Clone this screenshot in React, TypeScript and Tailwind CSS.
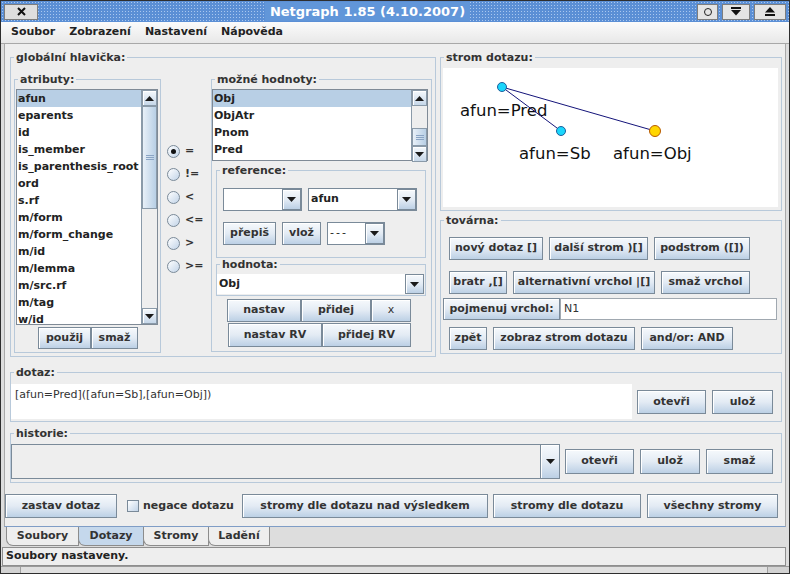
import React from 'react';

type Kids = { children?: React.ReactNode; className?: string };

const Tri = ({ up = false }: { up?: boolean }) => (
  <svg width="9" height="5" viewBox="0 0 9 5">
    <path d={up ? 'M0 5h9L4.5 0z' : 'M0 0h9L4.5 5z'} fill="#1a1a1a" />
  </svg>
);

const Btn = ({ children, className = '' }: Kids) => (
  <button
    type="button"
    className={`flex shrink-0 items-center justify-center whitespace-nowrap border border-[#7a8a99] bg-linear-to-b from-[#f6f9fc] via-[#e3ebf4] to-[#bcd0e5] text-[11px] font-bold text-[#333] shadow-[inset_1px_1px_0_#ffffff] ${className}`}
  >
    {children}
  </button>
);

const Group = ({ title, className = '', children }: Kids & { title: string }) => (
  <fieldset className={`min-w-0 shrink-0 border border-[#b8c9da] ${className}`}>
    <legend className="ml-[3px] px-[2px] text-[11px] font-bold leading-[13px] text-[#333]">{title}</legend>
    {children}
  </fieldset>
);

const ScrollBtn = ({ up = false }: { up?: boolean }) => (
  <div className="flex h-[16px] shrink-0 items-center justify-center border border-[#8a9aa9] bg-linear-to-b from-[#f6f9fc] to-[#c6d7e9] shadow-[inset_1px_1px_0_#ffffff]">
    <Tri up={up} />
  </div>
);

// vertical scrollbar, gap/thumb heights given as class names
const VScroll = ({ gap, thumb }: { gap: string; thumb: string }) => (
  <div className="flex w-[16px] shrink-0 flex-col border-l border-[#8a9aa9] bg-[#eeeeee]">
    <ScrollBtn up />
    <div className="flex flex-1 flex-col">
      <div className={gap} />
      <div
        className={`flex flex-col items-center justify-center gap-[1px] border border-[#8a9aa9] bg-linear-to-r from-[#e8f0f8] to-[#b8cfe5] ${thumb}`}
      >
        <div className="h-px w-[8px] bg-[#8aa4c4]" />
        <div className="h-px w-[8px] bg-[#8aa4c4]" />
        <div className="h-px w-[8px] bg-[#8aa4c4]" />
      </div>
    </div>
    <ScrollBtn />
  </div>
);

const ListBox = ({
  items,
  className = '',
  gap,
  thumb,
}: {
  items: string[];
  className?: string;
  gap: string;
  thumb: string;
}) => (
  <div className={`flex shrink-0 border border-[#7f8a96] bg-white ${className}`}>
    <div className="flex-1 overflow-hidden">
      {items.map((it, i) => (
        <div
          key={it}
          className={`h-[17px] whitespace-nowrap pl-[1px] text-[11px] font-bold leading-[17px] text-[#222] ${i === 0 ? 'bg-[#b8cfe5]' : ''}`}
        >
          {it}
        </div>
      ))}
    </div>
    <VScroll gap={gap} thumb={thumb} />
  </div>
);

const Combo = ({
  value = '',
  className = '',
  flat = false,
  textClass = '',
}: {
  value?: string;
  className?: string;
  flat?: boolean;
  textClass?: string;
}) => (
  <div className={`flex shrink-0 bg-white ${flat ? '' : 'border border-[#7a8a99]'} ${className}`}>
    <div className={`flex flex-1 items-center overflow-hidden pl-[2px] text-[11px] font-bold text-[#222] ${textClass}`}>{value}</div>
    <div className="flex w-[19px] items-center justify-center border border-[#7a8a99] bg-linear-to-b from-[#f6f9fc] via-[#e3ebf4] to-[#bcd0e5] shadow-[inset_1px_1px_0_#ffffff]">
      <Tri />
    </div>
  </div>
);

const Radio = ({ on = false, label }: { on?: boolean; label: string }) => (
  <div className="flex h-[23px] items-center">
    <div className="flex h-[13px] w-[13px] items-center justify-center rounded-full border border-[#7a8a99] bg-linear-to-br from-white to-[#c2d4e8]">
      {on && <div className="h-[5px] w-[5px] rounded-full bg-[#111]" />}
    </div>
    <span className="ml-[5px] text-[11px] font-bold text-[#333]">{label}</span>
  </div>
);

const TitleBar = () => (
  <div className="flex h-[21px] shrink-0 items-center bg-[#5b8fd5] bg-[radial-gradient(circle,#a9c7ef_0.7px,transparent_0.9px)] bg-[length:3px_3px]">
    <div className="ml-[3px] flex h-[16px] w-[34px] items-center justify-center border border-[#7d7d7d] bg-[#dedede]">
      <svg width="9" height="9" viewBox="0 0 9 9">
        <path d="M1 1l7 7M8 1l-7 7" stroke="#111" strokeWidth="2" />
      </svg>
    </div>
    <div className="flex flex-1 justify-center">
      <span className="bg-[#6196d9] px-[5px] text-[13px] font-bold leading-[19px] text-white">Netgraph 1.85 (4.10.2007)</span>
    </div>
    <div className="mr-[3px] flex gap-[4px]">
      <div className="flex h-[16px] w-[21px] items-center justify-center border border-[#7d7d7d] bg-[#e4e4e4]">
        <div className="h-[8px] w-[8px] rounded-full border border-[#222]" />
      </div>
      <div className="flex h-[16px] w-[28px] items-center justify-center border border-[#7d7d7d] bg-[#e4e4e4]">
        <svg width="10" height="9" viewBox="0 0 10 9">
          <rect x="0" y="0" width="10" height="2" fill="#111" />
          <path d="M0 3h10L5 8.5z" fill="#111" />
        </svg>
      </div>
      <div className="flex h-[16px] w-[32px] items-center justify-center border border-[#7d7d7d] bg-[#e4e4e4]">
        <svg width="10" height="9" viewBox="0 0 10 9">
          <path d="M0 5.5h10L5 0z" fill="#111" />
          <rect x="0" y="7" width="10" height="2" fill="#111" />
        </svg>
      </div>
    </div>
  </div>
);

const MenuBar = () => (
  <div className="flex h-[22px] shrink-0 items-center border-b border-[#a8a8a8] bg-linear-to-b from-[#fbfbfb] to-[#e8e8e8] pl-[3px] text-[11px] font-bold text-[#222]">
    {['Soubor', 'Zobrazení', 'Nastavení', 'Nápověda'].map((m) => (
      <span key={m} className="px-[7px]">
        {m}
      </span>
    ))}
  </div>
);

const QueryGraph = () => (
  <svg width="335" height="139" className="block">
    <g fontFamily="DejaVu Sans, sans-serif" fontSize="16.5" fontWeight="normal" fill="#111">
      <text x="17" y="48">afun=Pred</text>
      <text x="76" y="91">afun=Sb</text>
      <text x="170" y="91">afun=Obj</text>
    </g>
    <line x1="59" y1="19" x2="118" y2="63" stroke="#14147a" strokeWidth="1" />
    <line x1="59" y1="19" x2="212" y2="63" stroke="#14147a" strokeWidth="1" />
    <circle cx="59" cy="19" r="4.5" fill="#1ad6fc" stroke="#1d5f9c" />
    <circle cx="118" cy="63" r="4.5" fill="#1ad6fc" stroke="#1d5f9c" />
    <circle cx="212" cy="63" r="5.5" fill="#ffd600" stroke="#b85a00" />
  </svg>
);

const attrs = [
  'afun',
  'eparents',
  'id',
  'is_member',
  'is_parenthesis_root',
  'ord',
  's.rf',
  'm/form',
  'm/form_change',
  'm/id',
  'm/lemma',
  'm/src.rf',
  'm/tag',
  'w/id',
];

export default function App() {
  return (
    <div className="flex h-[574px] w-[790px] flex-col overflow-hidden border border-[#2e2e2e] bg-[#dddddd] font-['DejaVu_Sans',sans-serif] text-[11px] font-bold text-[#333]">
      <TitleBar />
      <MenuBar />

      {/* Dotazy tab content */}
      <div className="mx-[3px] flex h-[483px] shrink-0 flex-col border-x border-b border-x-[#a9a9a9] border-b-[#7f9dc6] bg-[#eeeeee] pt-[7px]">
        <div className="flex h-[306px]">
          <Group title="globální hlavička:" className="ml-[5px] h-[306px] w-[426px]">
            <div className="flex pl-[3px] pt-[9px]">
              <Group title="atributy:" className="h-[280px] w-[147px]">
                <div className="flex flex-col pl-[1px] pt-[3px]">
                  <ListBox items={attrs} className="h-[236px] w-[142px]" gap="h-0" thumb="h-[103px]" />
                  <div className="mt-[2px] flex justify-center">
                    <Btn className="h-[22px] w-[53px]">použij</Btn>
                    <Btn className="h-[22px] w-[47px]">smaž</Btn>
                  </div>
                </div>
              </Group>

              <div className="flex w-[50px] shrink-0 flex-col pl-[6px] pt-[67px]">
                <Radio on label="=" />
                <Radio label="!=" />
                <Radio label="<" />
                <Radio label="<=" />
                <Radio label=">" />
                <Radio label=">=" />
              </div>

              <Group title="možné hodnoty:" className="h-[279px] w-[221px]">
                <div className="flex flex-col pt-[3px]">
                  <ListBox
                    items={['Obj', 'ObjAtr', 'Pnom', 'Pred']}
                    className="h-[72px] w-[216px]"
                    gap="h-[22px]"
                    thumb="h-[18px]"
                  />
                  <Group title="reference:" className="ml-[4px] mt-[3px] h-[94px] w-[210px]">
                    <div className="flex flex-col pl-[6px] pt-[11px]">
                      <div className="flex gap-[6px]">
                        <Combo className="h-[23px] w-[79px]" />
                        <Combo value="afun" className="h-[23px] w-[109px]" />
                      </div>
                      <div className="mt-[11px] flex gap-[6px]">
                        <Btn className="h-[23px] w-[53px]">přepiš</Btn>
                        <Btn className="h-[23px] w-[39px]">vlož</Btn>
                        <Combo value="---" textClass="tracking-[2px] font-normal" className="h-[23px] w-[58px]" />
                      </div>
                    </div>
                  </Group>
                  <Group title="hodnota:" className="ml-[4px] h-[38px] w-[210px]">
                    <Combo flat value="Obj" className="mt-[3px] h-[20px] w-[207px]" />
                  </Group>
                  <div className="ml-[15px] mt-[3px] flex">
                    <Btn className="h-[23px] w-[74px]">nastav</Btn>
                    <Btn className="h-[23px] w-[70px]">přidej</Btn>
                    <Btn className="h-[23px] w-[40px] font-normal">x</Btn>
                  </div>
                  <div className="ml-[16px] mt-[1px] flex">
                    <Btn className="h-[24px] w-[94px]">nastav RV</Btn>
                    <Btn className="h-[24px] w-[89px]">přidej RV</Btn>
                  </div>
                </div>
              </Group>
            </div>
          </Group>

          <div className="ml-[4px] flex w-[342px] flex-col">
            <Group title="strom dotazu:" className="h-[160px] w-[342px]">
              <div className="pl-[2px] pt-[4px]">
                <div className="h-[139px] w-[335px] bg-white">
                  <QueryGraph />
                </div>
              </div>
            </Group>

            <Group title="továrna:" className="mt-[3px] h-[140px] w-[342px]">
              <div className="flex flex-col pt-[10px]">
                <div className="flex gap-[6px] pl-[8px]">
                  <Btn className="h-[23px] w-[94px]">nový dotaz []</Btn>
                  <Btn className="h-[23px] w-[99px]">další strom )[]</Btn>
                  <Btn className="h-[23px] w-[96px]">podstrom ([])</Btn>
                </div>
                <div className="mt-[11px] flex gap-[6px] pl-[8px]">
                  <Btn className="h-[23px] w-[58px]">bratr ,[]</Btn>
                  <Btn className="h-[23px] w-[142px]">alternativní vrchol |[]</Btn>
                  <Btn className="h-[23px] w-[89px]">smaž vrchol</Btn>
                </div>
                <div className="mt-[4px] flex pl-[2px]">
                  <Btn className="h-[22px] w-[117px]">pojmenuj vrchol:</Btn>
                  <div className="flex h-[22px] w-[217px] items-center border border-[#a0a8b0] bg-white pl-[3px] font-normal text-[#333]">
                    N1
                  </div>
                </div>
                <div className="mt-[7px] flex gap-[6px] pl-[8px]">
                  <Btn className="h-[23px] w-[38px]">zpět</Btn>
                  <Btn className="h-[23px] w-[142px]">zobraz strom dotazu</Btn>
                  <Btn className="h-[23px] w-[92px]">and/or: AND</Btn>
                </div>
              </div>
            </Group>
          </div>
        </div>

        <Group title="dotaz:" className="ml-[5px] mt-[9px] h-[56px] w-[772px]">
          <div className="flex items-start pt-[5px]">
            <div className="h-[35px] w-[621px] shrink-0 bg-white pl-[4px] pt-[4px] text-[11px] font-normal leading-[13px] text-[#333]">
              [afun=Pred]([afun=Sb],[afun=Obj])
            </div>
            <Btn className="ml-[5px] mt-[6px] h-[24px] w-[69px]">otevři</Btn>
            <Btn className="ml-[6px] mt-[6px] h-[24px] w-[61px]">ulož</Btn>
          </div>
        </Group>

        <Group title="historie:" className="ml-[5px] mt-[5px] h-[56px] w-[772px]">
          <div className="flex items-start pt-[4px]">
            <div className="flex h-[35px] w-[549px] shrink-0 justify-end border border-[#7a8a99] bg-[#eeeeee]">
              <div className="flex w-[19px] items-center justify-center border-l border-[#7a8a99] bg-linear-to-b from-[#f6f9fc] via-[#e3ebf4] to-[#bcd0e5] shadow-[inset_1px_1px_0_#ffffff]">
                <Tri />
              </div>
            </div>
            <Btn className="ml-[5px] mt-[5px] h-[25px] w-[69px]">otevři</Btn>
            <Btn className="ml-[6px] mt-[5px] h-[25px] w-[60px]">ulož</Btn>
            <Btn className="ml-[6px] mt-[5px] h-[25px] w-[67px]">smaž</Btn>
          </div>
        </Group>

        <div className="mt-[11px] flex h-[24px]">
          <Btn className="h-[24px] w-[112px]">zastav dotaz</Btn>
          <div className="flex w-[125px] shrink-0 items-center pl-[10px]">
            <div className="h-[12px] w-[12px] border border-[#7a8a99] bg-linear-to-br from-white to-[#c2d4e8]" />
            <span className="ml-[4px] whitespace-nowrap">negace dotazu</span>
          </div>
          <Btn className="h-[24px] w-[246px]">stromy dle dotazu nad výsledkem</Btn>
          <Btn className="ml-[5px] h-[24px] w-[148px]">stromy dle dotazu</Btn>
          <Btn className="ml-[6px] h-[24px] w-[131px]">všechny stromy</Btn>
        </div>
      </div>

      {/* tabs */}
      <div className="flex h-[19px] shrink-0 pl-[5px]">
        {[
          { t: 'Soubory', w: 'w-[73px]', on: false },
          { t: 'Dotazy', w: 'w-[66px]', on: true },
          { t: 'Stromy', w: 'w-[66px]', on: false },
          { t: 'Ladění', w: 'w-[62px]', on: false },
        ].map((tab, i) => (
          <div
            key={tab.t}
            className={`flex items-center justify-center rounded-bl-[7px] border-x border-b border-[#8c8c8c] ${tab.w} ${i > 0 ? '-ml-px' : ''} ${tab.on ? 'bg-[#c5d8ec]' : 'bg-[#eeeeee]'}`}
          >
            {tab.t}
          </div>
        ))}
      </div>

      {/* status bar */}
      <div className="ml-[1px] mr-[3px] mt-[1px] flex h-[19px] shrink-0 items-center border border-[#8e8e8e] bg-[#eeeeee] pl-[3px] text-[#222]">
        Soubory nastaveny.
      </div>

      <div className="flex h-[7px] shrink-0 justify-between border-t border-[#9a9a9a] bg-[#e0e0e0]">
        <div className="h-full w-[20px] border-r border-[#a0a0a0] bg-[#d2d2d2]" />
        <div className="h-full w-[22px] border-l border-[#a0a0a0] bg-[#d2d2d2]" />
      </div>
    </div>
  );
}
